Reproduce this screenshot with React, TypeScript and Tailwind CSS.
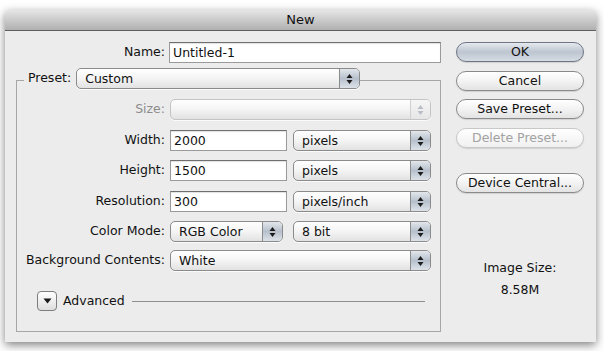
const font = { fontFamily: '"DejaVu Sans", "Liberation Sans", sans-serif' };

function Arrows({ disabled = false }: { disabled?: boolean }) {
  const c = disabled ? "#b9bec6" : "#1c1c1c";
  return (
    <svg width="7" height="12" viewBox="0 0 7 12">
      <path d="M3.5 1 L6.5 5 L0.5 5 Z" fill={c} />
      <path d="M3.5 11 L6.5 7 L0.5 7 Z" fill={c} />
    </svg>
  );
}

function Popup({ value, width, disabled = false }: { value: string; width: string; disabled?: boolean }) {
  return (
    <div
      className={`${width} flex h-[21px] shrink-0 items-stretch overflow-hidden rounded-[5px] border ${
        disabled ? "border-[#c4c4c4]" : "border-[#8b8b8b]"
      } bg-gradient-to-b from-white via-[#f4f4f4] to-[#e2e2e2] shadow-[0_1px_0_rgba(255,255,255,0.8)]`}
    >
      <div className="flex-1 truncate pl-[8px] text-[12.5px] leading-[19px] text-[#111]">{value}</div>
      <div
        className={`flex w-[20px] items-center justify-center border-l ${
          disabled
            ? "border-[#d0d0d0] bg-gradient-to-b from-[#f6f6f6] to-[#e6e6e6]"
            : "border-[#8b8b8b] bg-gradient-to-b from-[#e3e7ec] via-[#b6c0cc] to-[#dde2e8]"
        }`}
      >
        <Arrows disabled={disabled} />
      </div>
    </div>
  );
}

function Field({ value, width }: { value: string; width: string }) {
  return (
    <div
      className={`${width} h-[21px] shrink-0 border border-[#9a9a9a] border-t-[#6f6f6f] bg-white pl-[3px] text-[12.5px] leading-[19px] text-[#111] shadow-[inset_0_1px_1px_rgba(0,0,0,0.12)]`}
    >
      {value}
    </div>
  );
}

function Row({
  label,
  children,
  dim = false,
  top,
  gap = "gap-[6px]",
}: {
  label: string;
  children: React.ReactNode;
  dim?: boolean;
  top: string;
  gap?: string;
}) {
  return (
    <div className={`${top} flex h-[21px] items-center`}>
      <div className={`w-[149px] pr-[1px] text-right text-[12.5px] ${dim ? "text-[#8c8c8c]" : "text-[#111]"}`}>
        {label}
      </div>
      <div className={`ml-[4px] flex ${gap}`}>{children}</div>
    </div>
  );
}

function Button({ label, kind = "normal" }: { label: string; kind?: "normal" | "default" | "disabled" }) {
  const cls =
    kind === "default"
      ? "border-[#6e7683] bg-gradient-to-b from-[#e6eaef] via-[#bcc5d0] to-[#d6dce3] text-[#111]"
      : kind === "disabled"
      ? "border-[#c8c8c8] bg-gradient-to-b from-white to-[#f0f0f0] text-[#a2a2a2]"
      : "border-[#8a8a8a] bg-gradient-to-b from-white via-[#f3f3f3] to-[#e3e3e3] text-[#111]";
  return (
    <div
      className={`flex h-[20px] w-[128px] items-center justify-center rounded-full border text-[12.5px] shadow-[0_1px_1px_rgba(0,0,0,0.12)] ${cls}`}
    >
      {label}
    </div>
  );
}

export default function App() {
  return (
    <div className="h-[351px] w-[604px] overflow-hidden bg-white pl-[5px] pt-[10px]" style={font}>
      <div className="h-[332px] w-[591px] rounded-t-[4px] bg-[#ececec] shadow-[0_3px_10px_rgba(0,0,0,0.5)]">
        <div className="flex h-[21px] items-center justify-center rounded-t-[4px] border-b border-[#5e5e5e] bg-gradient-to-b from-[#e6e6e6] to-[#b0b0b0] text-[13px] text-[#111]">
          New
        </div>

        <div className="flex">
          <div className="pl-[11px]">
            <div className="mt-[11px] flex h-[21px] items-center">
              <div className="w-[149px] text-right text-[12.5px] text-[#111]">Name:</div>
              <div className="ml-[4px]">
                <Field value="Untitled-1" width="w-[272px]" />
              </div>
            </div>

            <div className="mt-[17px] h-[252px] w-[425px] border border-[#a6a6a6]">
              <div className="-mt-[13px] ml-[7px] flex h-[21px] items-center">
                <div className="bg-[#ececec] pl-[4px] pr-[5px] text-[12.5px] text-[#111]">Preset:</div>
                <Popup value="Custom" width="w-[284px]" />
              </div>

              <div className="flex flex-col">
                <Row label="Size:" dim top="mt-[10px]">
                  <Popup value="" width="w-[261px]" disabled />
                </Row>
                <Row label="Width:" top="mt-[10px]">
                  <Field value="2000" width="w-[117px]" />
                  <Popup value="pixels" width="w-[138px]" />
                </Row>
                <Row label="Height:" top="mt-[9px]">
                  <Field value="1500" width="w-[117px]" />
                  <Popup value="pixels" width="w-[138px]" />
                </Row>
                <Row label="Resolution:" top="mt-[10px]">
                  <Field value="300" width="w-[117px]" />
                  <Popup value="pixels/inch" width="w-[138px]" />
                </Row>
                <Row label="Color Mode:" top="mt-[9px]" gap="gap-[10px]">
                  <Popup value="RGB Color" width="w-[113px]" />
                  <Popup value="8 bit" width="w-[138px]" />
                </Row>
                <Row label="Background Contents:" top="mt-[8px]">
                  <Popup value="White" width="w-[261px]" />
                </Row>
              </div>

              <div className="ml-[20px] mt-[20px] flex h-[20px] items-center">
                <div className="flex h-[20px] w-[20px] items-center justify-center rounded-[4px] border border-[#7d7d7d] bg-gradient-to-b from-white to-[#dedede]">
                  <svg width="9" height="6" viewBox="0 0 9 6">
                    <path d="M0.5 0.5 L8.5 0.5 L4.5 5.5 Z" fill="#1a1a1a" />
                  </svg>
                </div>
                <div className="ml-[6px] text-[12.5px] text-[#111]">Advanced</div>
                <div className="ml-[7px] h-px w-[293px] bg-[#8f8f8f]" />
              </div>
            </div>
          </div>

          <div className="ml-[15px] mt-[11px] flex flex-col">
            <Button label="OK" kind="default" />
            <div className="mt-[9px]">
              <Button label="Cancel" />
            </div>
            <div className="mt-[8px]">
              <Button label="Save Preset..." />
            </div>
            <div className="mt-[9px]">
              <Button label="Delete Preset..." kind="disabled" />
            </div>
            <div className="mt-[25px]">
              <Button label="Device Central..." />
            </div>
            <div className="mt-[64px] text-center text-[12.5px] leading-[22px] text-[#111]">
              <div>Image Size:</div>
              <div>8.58M</div>
            </div>
          </div>
        </div>
      </div>
    </div>
  );
}
